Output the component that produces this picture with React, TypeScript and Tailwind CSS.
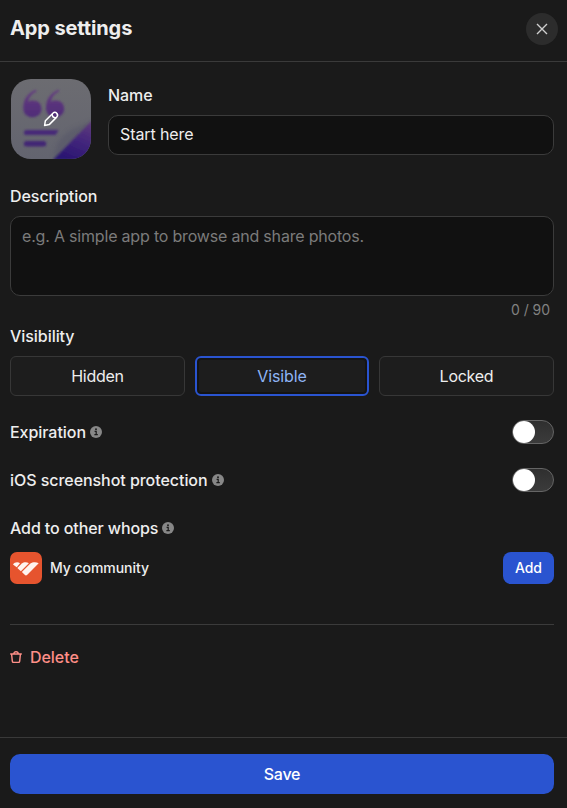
import React from "react";

function InfoIcon() {
  return (
    <svg className="h-3 w-3 shrink-0" viewBox="0 0 12 12">
      <circle cx="6" cy="6" r="6" fill="#878787" />
      <circle cx="6" cy="3.3" r="0.95" fill="#1a1a1a" />
      <path d="M4.6 5.3H6.2V8.6M4.4 8.7H7.8" fill="none" stroke="#1a1a1a" strokeWidth="1.2" />
    </svg>
  );
}

function AppIcon() {
  return (
    <svg className="h-20 w-20" viewBox="0 0 80 80">
      <defs>
        <linearGradient id="paper" x1="0" y1="0" x2="0" y2="1">
          <stop offset="0" stopColor="#6c6c71" />
          <stop offset="1" stopColor="#63646f" />
        </linearGradient>
        <linearGradient id="fold" x1="0.9" y1="0" x2="0.5" y2="1">
          <stop offset="0" stopColor="#603a7c" />
          <stop offset="0.5" stopColor="#43267c" />
          <stop offset="1" stopColor="#2b1672" />
        </linearGradient>
        <linearGradient id="ink" x1="0" y1="0" x2="0" y2="1">
          <stop offset="0" stopColor="#653d80" />
          <stop offset="1" stopColor="#4f2b78" />
        </linearGradient>
        <filter id="soft" x="-20%" y="-20%" width="140%" height="140%">
          <feGaussianBlur stdDeviation="0.8" />
        </filter>
        <filter id="shade" x="-30%" y="-30%" width="160%" height="160%">
          <feGaussianBlur stdDeviation="2" />
        </filter>
        <clipPath id="tile">
          <rect width="80" height="80" rx="20" />
        </clipPath>
      </defs>
      <g clipPath="url(#tile)">
        <rect width="80" height="80" fill="url(#paper)" />
        <path d="M43 80C44 66 48 60 57 53C65 47 72 47 80 42V80Z" fill="#555568" opacity="0.5" filter="url(#shade)" />
        <g filter="url(#soft)">
          <path d="M42 81L81 41.5V81Z" fill="url(#fold)" />
          <path d="M25 10.5C17 14 12.3 20 12.3 29C12.3 35 16 38.2 21.3 38.2C26.8 38.2 30.5 34.5 30.5 29.8C30.5 25 27 21.6 22 21.6C19.7 21.6 18.2 22 17 23C18 17.8 21 14.6 25.6 12.2Z" fill="url(#ink)" />
          <path d="M47.7 10.5C39.7 14 35 20 35 29C35 35 38.7 38.2 44 38.2C49.5 38.2 53.2 34.5 53.2 29.8C53.2 25 49.7 21.6 44.7 21.6C42.4 21.6 40.9 22 39.7 23C40.7 17.8 43.7 14.6 48.3 12.2Z" fill="url(#ink)" />
          <path d="M15.5 50.9H47.5L44.8 56.1H15.5A2.6 2.6 0 0 1 15.5 50.9Z" fill="#472b78" />
          <rect x="12.8" y="62" width="22.5" height="5.5" rx="2.7" fill="#432774" />
        </g>
        <g fill="none" stroke="#fff" strokeWidth="1.5" strokeLinejoin="round">
          <path d="M33.6 46.4L34.4 41.7L41.9 34.2Q43.9 32.3 45.6 34.1Q47.6 36 45.7 38.1L38.2 45.6Z" />
          <path d="M41.2 35C41 37.5 42.4 38.9 45 38.7" />
        </g>
      </g>
    </svg>
  );
}

function CommunityLogo() {
  return (
    <svg className="h-8 w-8" viewBox="0 0 32 32">
      <rect width="32" height="32" rx="7" fill="#e6542e" />
      <g fill="#fff4ef">
        <path d="M3 12.6C4.4 9.9 8 9.6 10 11.2L6.7 15.2Z" />
        <path d="M7.3 15.9L11.8 11.6C13.5 10 16.8 9.8 18.9 11.2L10.9 19.2Z" />
        <path d="M11.9 20.1L20.4 11.6C22.5 9.9 26.3 9.8 28.7 11.3L17.3 22.7C16.5 23.6 15.5 23.6 14.7 22.8Z" />
      </g>
    </svg>
  );
}

function Toggle() {
  return (
    <button
      role="switch"
      aria-checked="false"
      className="flex h-6 w-[42px] items-center rounded-full border border-[#656565] bg-linear-to-b from-[#2f2f2f] to-[#3b3b3b]"
    >
      <span className="h-[22px] w-[22px] rounded-full bg-white" />
    </button>
  );
}

function ToggleRow({ label }: { label: string }) {
  return (
    <div className="flex h-6 items-center justify-between">
      <span className="flex items-center gap-1">
        {label}
        <InfoIcon />
      </span>
      <Toggle />
    </div>
  );
}

export default function App() {
  return (
    <div className="flex h-[808px] w-[567px] flex-col bg-[#1a1a1a] font-['Inter',sans-serif] text-base font-medium tracking-[-0.05px] text-[#eeeeee]">
      <header className="flex h-[62px] items-center justify-between border-b border-[#3a3a3a] pr-[9px] pb-1 pl-2.5">
        <h1 className="pb-0.5 text-xl font-bold tracking-[-0.12px]">App settings</h1>
        <button className="flex h-8 w-8 items-center justify-center rounded-full bg-[#2c2c2c]" aria-label="Close">
          <svg className="h-3 w-3" viewBox="0 0 12 12">
            <path d="M1 1L11 11M11 1L1 11" stroke="#cfcfcf" strokeWidth="1.4" />
          </svg>
        </button>
      </header>

      <main className="flex flex-1 flex-col pr-[13px] pl-2.5">
        <section className="mt-[17px] flex h-[81px] gap-[17px]">
          <div className="ml-px h-20 w-20 shrink-0">
            <AppIcon />
          </div>
          <label className="flex flex-1 flex-col pt-1">
            <span>Name</span>
            <input
              className="mt-2 h-10 w-full rounded-[10px] border border-[#3b3b3b] bg-[#111111] px-[11px] pb-0.5 font-normal tracking-[-0.1px] outline-none"
              defaultValue="Start here"
            />
          </label>
        </section>

        <label className="mt-6 flex flex-col">
          <span>Description</span>
          <textarea
            className="mt-2 h-20 resize-none rounded-[10px] border border-[#3b3b3b] bg-[#111111] px-[11px] py-[7px] font-normal tracking-[-0.19px] outline-none placeholder:text-[#7b7b7b]"
            placeholder="e.g. A simple app to browse and share photos."
          />
        </label>
        <div className="mt-1 pr-1 text-right text-sm font-normal tracking-[-0.05px] text-[#818181]">0 / 90</div>

        <div className="mt-1">Visibility</div>
        <div className="mt-2 grid grid-cols-[175px_174px_175px] justify-between font-normal tracking-[-0.25px]">
          <button className="h-10 rounded-md border border-[#373737] bg-[#1d1d1d]">Hidden</button>
          <button className="h-10 rounded-md border-2 border-[#2a54d0] bg-[#1d1d1d] tracking-[-0.1px] text-[#8fb4f5] shadow-[inset_0_0_0_2px_#141414]">
            Visible
          </button>
          <button className="h-10 rounded-md border border-[#373737] bg-[#1d1d1d]">Locked</button>
        </div>

        <div className="mt-6 flex flex-col gap-6">
          <ToggleRow label="Expiration" />
          <ToggleRow label="iOS screenshot protection" />
          <div className="flex items-center gap-1">
            <span className="tracking-[-0.1px]">Add to other whops</span>
            <InfoIcon />
          </div>
        </div>

        <div className="mt-3 flex items-center justify-between text-sm">
          <span className="flex items-center gap-2">
            <CommunityLogo />
            My community
          </span>
          <button className="h-8 w-[51px] rounded-lg bg-[#2a54d0] text-white">Add</button>
        </div>

        <div className="mt-10 border-t border-[#3b3b3b]" />

        <button className="mt-5 flex items-center gap-2 self-start text-[#ff8f88]">
          <svg className="h-3 w-3" viewBox="0 0 12 12" fill="none" stroke="currentColor" strokeWidth="1.4">
            <path d="M0.2 3H11.8M1.6 3L2.3 10.1Q2.45 11.4 3.6 11.4H8.4Q9.55 11.4 9.7 10.1L10.4 3M3.8 2.9C3.8 0.1 8.2 0.1 8.2 2.9" />
          </svg>
          Delete
        </button>
      </main>

      <footer className="h-[71px] border-t border-[#393939] pt-4 pr-[13px] pl-2.5">
        <button className="h-10 w-full rounded-[10px] bg-[#2a54d0] tracking-[-0.2px] text-white">Save</button>
      </footer>
    </div>
  );
}
